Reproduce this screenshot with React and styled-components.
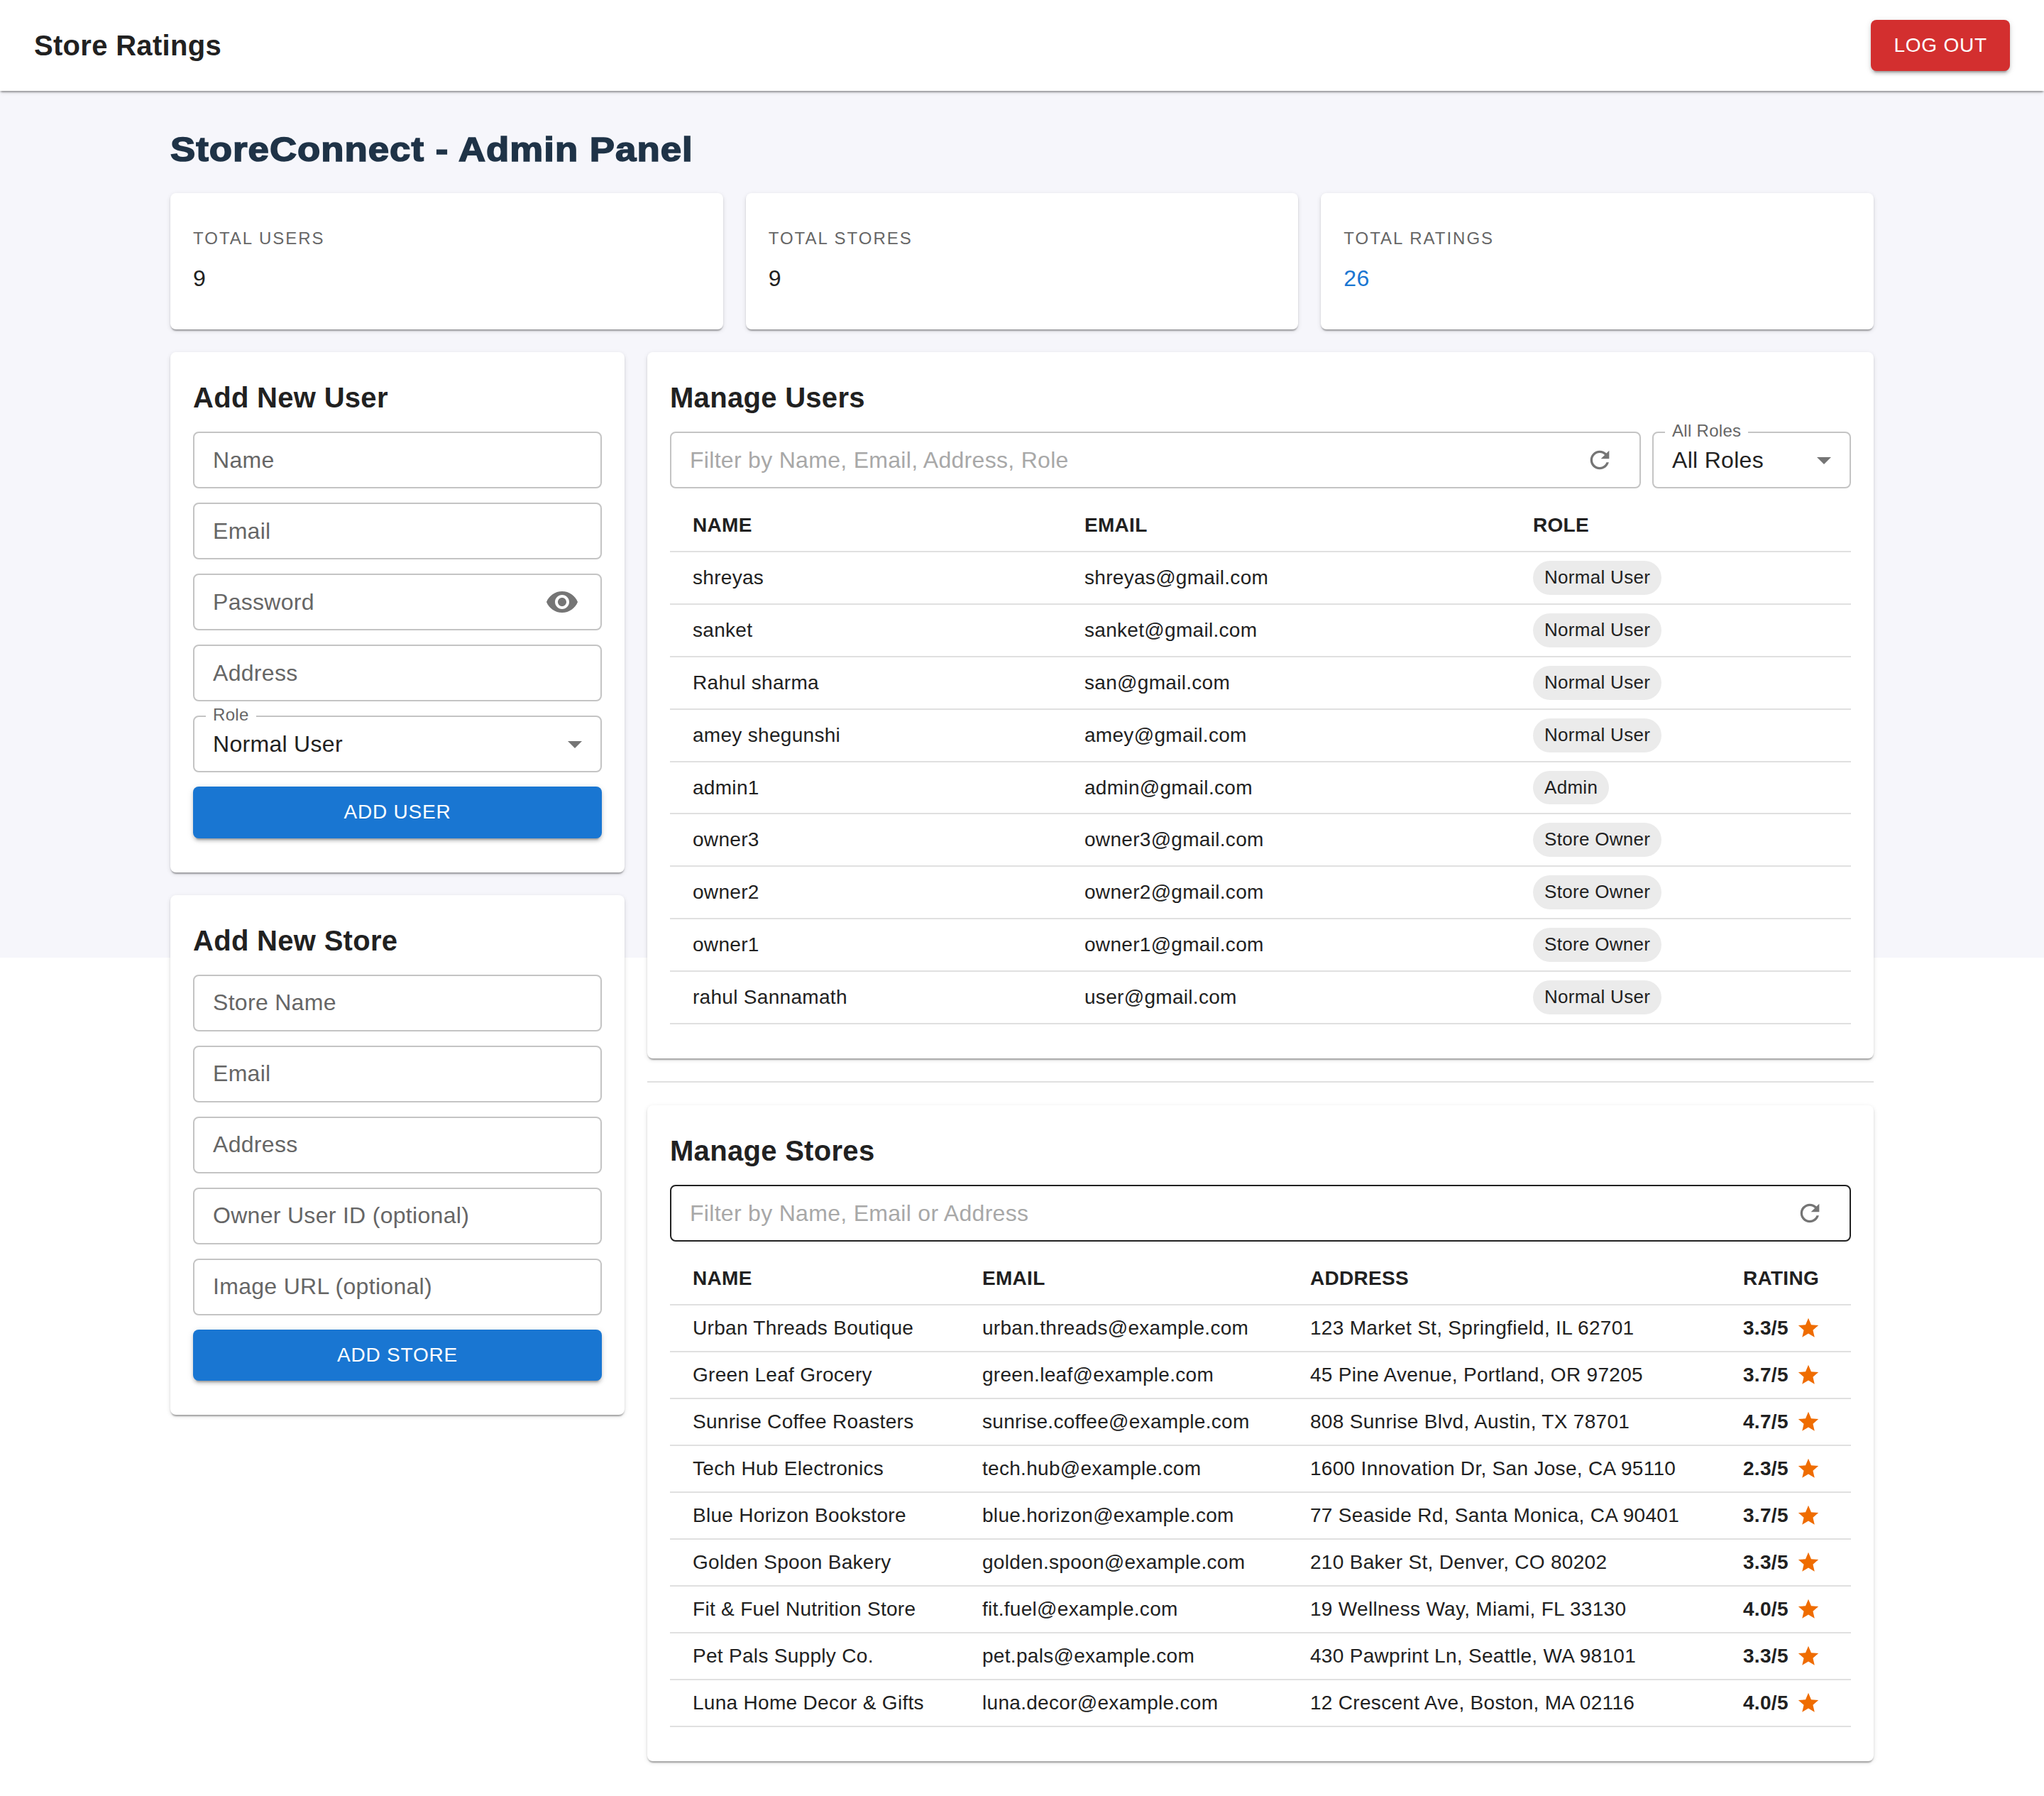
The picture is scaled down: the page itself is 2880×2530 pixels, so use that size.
import styled, { createGlobalStyle } from "styled-components";

const GlobalStyle = createGlobalStyle`
html, body {
    margin: 0;
    padding: 0;
    background: #fff;
    color: #212121;
    font-family: "Liberation Sans", Arial, sans-serif;
}
* {
    box-sizing: border-box;
}
`

const cardShadow = "0 4px 2px -2px rgba(0,0,0,.2), 0 2px 2px 0 rgba(0,0,0,.14), 0 2px 6px 0 rgba(0,0,0,.12)";
const buttonShadow = "0 6px 2px -4px rgba(0,0,0,.2), 0 4px 4px 0 rgba(0,0,0,.14), 0 2px 10px 0 rgba(0,0,0,.12)";

const Shell = styled.div`
min-height: 2530px;
background: linear-gradient(#f6f6fb, #f6f6fb) no-repeat top / 100% 1349px;
`

const TopBar = styled.header`
height: 128px;
padding: 0 48px;
display: flex;
align-items: center;
justify-content: space-between;
background: #fff;
box-shadow: ${cardShadow};
`

const Brand = styled.div`
font-size: 40px;
line-height: 64px;
font-weight: 700;
letter-spacing: 0.3px;
`

const ActionButton = styled.button`
display: block;
width: ${(p) => p.$full ? "100%" : "auto"};
height: 72.5px;
padding: 0 32px;
border: none;
border-radius: 8px;
background: ${(p) => p.$color};
color: #fff;
font-family: inherit;
font-size: 28px;
letter-spacing: 0.8px;
box-shadow: ${buttonShadow};
`

const Container = styled.main`
width: 2400px;
margin: 0 auto;
padding-top: 48px;
`

const PageTitle = styled.h1`
margin: 0 0 26px;
font-size: 48px;
line-height: 70px;
font-weight: 700;
letter-spacing: 0.9px;
color: #1f3347;
-webkit-text-stroke: 1.6px #1f3347;
transform: scaleX(1.1);
transform-origin: left center;
`

const StatGrid = styled.section`
display: grid;
grid-template-columns: repeat(3, 1fr);
gap: 32px;
margin-bottom: 32px;
`

const Card = styled.div`
background: #fff;
border-radius: 8px;
box-shadow: ${cardShadow};
padding: 32px 32px 48px;
`

const StatLabel = styled.div`
font-size: 24px;
line-height: 64px;
letter-spacing: 2px;
color: #666;
`

const StatValue = styled.div`
font-size: 32px;
line-height: 48px;
letter-spacing: 0.3px;
color: ${(p) => p.$color || "#212121"};
`

const Columns = styled.div`
display: grid;
grid-template-columns: 640px 1fr;
gap: 32px;
align-items: start;
`

const Stack = styled.div`
display: flex;
flex-direction: column;
gap: 32px;
`

const PanelTitle = styled.h2`
margin: 0 0 16px;
font-size: 40px;
line-height: 64px;
font-weight: 700;
letter-spacing: 0.3px;
`

const FormStack = styled.div`
display: flex;
flex-direction: column;
gap: 20px;
`

const FieldBox = styled.div`
position: relative;
flex: ${(p) => p.$grow ? "1" : "none"};
width: ${(p) => p.$width || "auto"};
height: 80px;
display: flex;
align-items: center;
padding: 0 ${(p) => p.$right ?? 26}px 0 26px;
background: #fff;
border: 2px solid ${(p) => p.$active ? "#212121" : "#c4c4c4"};
border-radius: 8px;
`

const FieldInput = styled.input`
flex: 1;
min-width: 0;
height: 100%;
padding: 0;
border: none;
outline: none;
background: transparent;
font-family: inherit;
font-size: 32px;
letter-spacing: 0.3px;
color: #212121;
&::placeholder {
    color: ${(p) => p.$hint ? "#a8a8a8" : "#666"};
    opacity: 1;
}
`

const FloatLabel = styled.span`
position: absolute;
left: 16px;
top: -17px;
padding: 0 10px;
background: linear-gradient(transparent 15px, #fff 15px);
font-size: 24px;
line-height: 28px;
letter-spacing: 0.3px;
color: #666;
`

const SelectValue = styled.span`
flex: 1;
font-size: 32px;
letter-spacing: 0.3px;
`

const FieldIcon = styled.svg`
flex: none;
display: block;
width: ${(p) => p.$size}px;
height: ${(p) => p.$size}px;
fill: #757575;
`

const TableToolbar = styled.div`
display: flex;
gap: 16px;
margin-bottom: 20px;
`

const Table = styled.table`
width: 100%;
table-layout: fixed;
border-collapse: separate;
border-spacing: 0;
font-size: 28px;
letter-spacing: 0.3px;
`

const Col = styled.col`
width: ${(p) => p.$w}px;
`

const HeadCell = styled.th`
padding: 11px 32px 15px;
font-size: 28px;
line-height: 42px;
font-weight: 700;
text-align: left;
white-space: nowrap;
border-bottom: 2px solid #e0e0e0;
`

const Cell = styled.td`
padding: 12px 32px;
line-height: 40px;
white-space: nowrap;
border-bottom: 2px solid #e0e0e0;
`

const Chip = styled.span`
display: inline-block;
height: 47.9px;
padding: 0 16px;
border-radius: 24px;
background: #ebebeb;
font-size: 26px;
line-height: 47px;
vertical-align: top;
`

const Rating = styled.span`
display: flex;
align-items: center;
gap: 11px;
font-weight: 700;
`

const StarIcon = styled.svg`
display: block;
width: 34px;
height: 34px;
fill: #ef6c00;
`

const Divider = styled.hr`
margin: 32px 0;
height: 2px;
border: none;
background: #e0e0e0;
`

const users = [
    ["shreyas", "shreyas@gmail.com", "Normal User"],
    ["sanket", "sanket@gmail.com", "Normal User"],
    ["Rahul sharma", "san@gmail.com", "Normal User"],
    ["amey shegunshi", "amey@gmail.com", "Normal User"],
    ["admin1", "admin@gmail.com", "Admin"],
    ["owner3", "owner3@gmail.com", "Store Owner"],
    ["owner2", "owner2@gmail.com", "Store Owner"],
    ["owner1", "owner1@gmail.com", "Store Owner"],
    ["rahul Sannamath", "user@gmail.com", "Normal User"],
];

const stores = [
    ["Urban Threads Boutique", "urban.threads@example.com", "123 Market St, Springfield, IL 62701", "3.3"],
    ["Green Leaf Grocery", "green.leaf@example.com", "45 Pine Avenue, Portland, OR 97205", "3.7"],
    ["Sunrise Coffee Roasters", "sunrise.coffee@example.com", "808 Sunrise Blvd, Austin, TX 78701", "4.7"],
    ["Tech Hub Electronics", "tech.hub@example.com", "1600 Innovation Dr, San Jose, CA 95110", "2.3"],
    ["Blue Horizon Bookstore", "blue.horizon@example.com", "77 Seaside Rd, Santa Monica, CA 90401", "3.7"],
    ["Golden Spoon Bakery", "golden.spoon@example.com", "210 Baker St, Denver, CO 80202", "3.3"],
    ["Fit & Fuel Nutrition Store", "fit.fuel@example.com", "19 Wellness Way, Miami, FL 33130", "4.0"],
    ["Pet Pals Supply Co.", "pet.pals@example.com", "430 Pawprint Ln, Seattle, WA 98101", "3.3"],
    ["Luna Home Decor & Gifts", "luna.decor@example.com", "12 Crescent Ave, Boston, MA 02116", "4.0"],
];

const stats = [
    { label: "TOTAL USERS", value: "9" },
    { label: "TOTAL STORES", value: "9" },
    { label: "TOTAL RATINGS", value: "26", color: "#1976d2" },
];

const ICON_REFRESH = "M17.65 6.35C16.2 4.9 14.21 4 12 4c-4.42 0-7.99 3.58-7.99 8s3.57 8 7.99 8c3.73 0 6.84-2.55 7.73-6h-2.08c-.82 2.33-3.04 4-5.65 4-3.31 0-6-2.69-6-6s2.69-6 6-6c1.66 0 3.14.69 4.22 1.78L13 11h7V4l-2.35 2.35z";
const ICON_EYE = "M12 4.5C7 4.5 2.73 7.61 1 12c1.73 4.39 6 7.5 11 7.5s9.27-3.11 11-7.5c-1.73-4.39-6-7.5-11-7.5zM12 17c-2.76 0-5-2.24-5-5s2.24-5 5-5 5 2.24 5 5-2.24 5-5 5zm0-8c-1.66 0-3 1.34-3 3s1.34 3 3 3 3-1.34 3-3-1.34-3-3-3z";
const ICON_ARROW = "M7 10l5 5 5-5z";
const ICON_STAR = "M12 17.27 18.18 21l-1.64-7.03L22 9.24l-7.19-.61L12 2 9.19 8.63 2 9.24l5.46 4.73L5.82 21z";

function Icon({ path, size }) {
    return (
        <FieldIcon $size={size} viewBox="0 0 24 24">
            <path d={path} />
        </FieldIcon>
    );
}

function SelectField({ label, value, width }) {
    return (
        <FieldBox $right={12} $width={width}>
            <FloatLabel>{label}</FloatLabel>
            <SelectValue>{value}</SelectValue>
            <Icon path={ICON_ARROW} size={48} />
        </FieldBox>
    );
}

function FilterField({ placeholder, active }) {
    return (
        <FieldBox $grow $right={36} $active={active}>
            <FieldInput $hint placeholder={placeholder} />
            <Icon path={ICON_REFRESH} size={40} />
        </FieldBox>
    );
}

function TextField({ placeholder }) {
    return (
        <FieldBox>
            <FieldInput placeholder={placeholder} />
        </FieldBox>
    );
}

export default function App() {
    return (
        <>
            <GlobalStyle />
            <Shell>
                <TopBar>
                    <Brand>Store Ratings</Brand>
                    <ActionButton $color="#d32f2f">LOG OUT</ActionButton>
                </TopBar>
                <Container>
                    <PageTitle>StoreConnect - Admin Panel</PageTitle>
                    <StatGrid>
                        {stats.map((s) => (
                            <Card key={s.label}>
                                <StatLabel>{s.label}</StatLabel>
                                <StatValue $color={s.color}>{s.value}</StatValue>
                            </Card>
                        ))}
                    </StatGrid>
                    <Columns>
                        <Stack>
                            <Card>
                                <PanelTitle>Add New User</PanelTitle>
                                <FormStack>
                                    <TextField placeholder="Name" />
                                    <TextField placeholder="Email" />
                                    <FieldBox $right={30}>
                                        <FieldInput placeholder="Password" />
                                        <Icon path={ICON_EYE} size={48} />
                                    </FieldBox>
                                    <TextField placeholder="Address" />
                                    <SelectField label="Role" value="Normal User" />
                                    <ActionButton $full $color="#1976d2">ADD USER</ActionButton>
                                </FormStack>
                            </Card>
                            <Card>
                                <PanelTitle>Add New Store</PanelTitle>
                                <FormStack>
                                    <TextField placeholder="Store Name" />
                                    <TextField placeholder="Email" />
                                    <TextField placeholder="Address" />
                                    <TextField placeholder="Owner User ID (optional)" />
                                    <TextField placeholder="Image URL (optional)" />
                                    <ActionButton $full $color="#1976d2">ADD STORE</ActionButton>
                                </FormStack>
                            </Card>
                        </Stack>
                        <div>
                            <Card>
                                <PanelTitle>Manage Users</PanelTitle>
                                <TableToolbar>
                                    <FilterField placeholder="Filter by Name, Email, Address, Role" />
                                    <SelectField label="All Roles" value="All Roles" width="280px" />
                                </TableToolbar>
                                <Table>
                                    <colgroup>
                                        <Col $w={552} />
                                        <Col $w={632} />
                                        <Col $w={480} />
                                    </colgroup>
                                    <thead>
                                        <tr>
                                            <HeadCell>NAME</HeadCell>
                                            <HeadCell>EMAIL</HeadCell>
                                            <HeadCell>ROLE</HeadCell>
                                        </tr>
                                    </thead>
                                    <tbody>
                                        {users.map((u) => (
                                            <tr key={u[1]}>
                                                <Cell>{u[0]}</Cell>
                                                <Cell>{u[1]}</Cell>
                                                <Cell><Chip>{u[2]}</Chip></Cell>
                                            </tr>
                                        ))}
                                    </tbody>
                                </Table>
                            </Card>
                            <Divider />
                            <Card>
                                <PanelTitle>Manage Stores</PanelTitle>
                                <TableToolbar>
                                    <FilterField active placeholder="Filter by Name, Email or Address" />
                                </TableToolbar>
                                <Table>
                                    <colgroup>
                                        <Col $w={408} />
                                        <Col $w={462} />
                                        <Col $w={610} />
                                        <Col $w={184} />
                                    </colgroup>
                                    <thead>
                                        <tr>
                                            <HeadCell>NAME</HeadCell>
                                            <HeadCell>EMAIL</HeadCell>
                                            <HeadCell>ADDRESS</HeadCell>
                                            <HeadCell>RATING</HeadCell>
                                        </tr>
                                    </thead>
                                    <tbody>
                                        {stores.map((s) => (
                                            <tr key={s[1]}>
                                                <Cell>{s[0]}</Cell>
                                                <Cell>{s[1]}</Cell>
                                                <Cell>{s[2]}</Cell>
                                                <Cell>
                                                    <Rating>
                                                        {s[3]}/5
                                                        <StarIcon viewBox="0 0 24 24"><path d={ICON_STAR} /></StarIcon>
                                                    </Rating>
                                                </Cell>
                                            </tr>
                                        ))}
                                    </tbody>
                                </Table>
                            </Card>
                        </div>
                    </Columns>
                </Container>
            </Shell>
        </>
    );
}
